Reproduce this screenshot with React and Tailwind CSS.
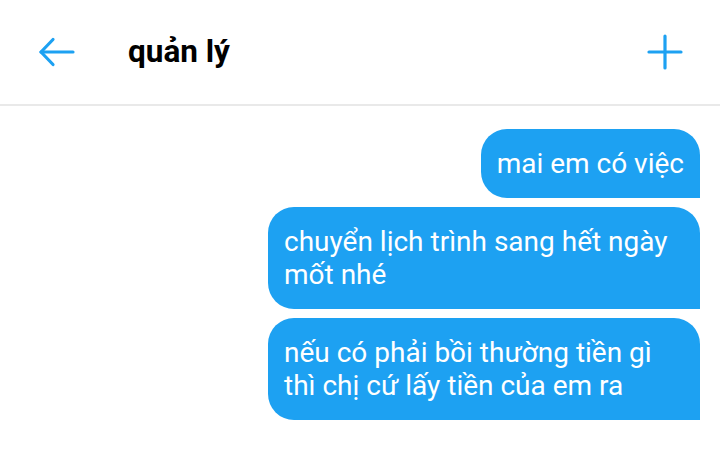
export default function App() {
  const messages = [
    { id: 1, text: "mai em có việc" },
    { id: 2, text: "chuyển lịch trình sang hết ngày mốt nhé" },
    { id: 3, text: "nếu có phải bồi thường tiền gì thì chị cứ lấy tiền của em ra" },
  ];

  return (
    <div className="w-[720px] h-[459px] bg-white overflow-hidden" style={{ fontFamily: "Roboto, 'Noto Sans', sans-serif" }}>
      {/* header */}
      <div className="h-[106px] flex items-center border-b-2 border-[#e9e9e9]">
        <button className="ml-[38px] w-[38px] h-[30px] flex items-center justify-center text-[#1da1f2]">
          <svg width="38" height="30" viewBox="0 0 38 30" fill="none" stroke="currentColor" strokeWidth="3.2" strokeLinecap="round" strokeLinejoin="round">
            <path d="M3 15H35" />
            <path d="M15 2.5L3 15L15 27.5" />
          </svg>
        </button>
        <h1 className="ml-[52px] text-[31.5px] font-bold text-black leading-none">quản lý</h1>
        <button className="ml-auto mr-[37px] w-[36px] h-[36px] flex items-center justify-center text-[#1da1f2]">
          <svg width="36" height="36" viewBox="0 0 36 36" fill="none" stroke="currentColor" strokeWidth="3.2" strokeLinecap="round">
            <path d="M18 2V34" />
            <path d="M2 18H34" />
          </svg>
        </button>
      </div>

      {/* messages */}
      <div className="flex flex-col items-end gap-[9px] pt-[23px] pr-[20px]">
        {messages.map((m) => (
          <div
            key={m.id}
            className="max-w-[432px] bg-[#1da1f2] text-white text-[28px] leading-[33px] px-[16px] py-[18px] rounded-t-[26px] rounded-bl-[26px]"
          >
            {m.text}
          </div>
        ))}
      </div>
    </div>
  );
}
